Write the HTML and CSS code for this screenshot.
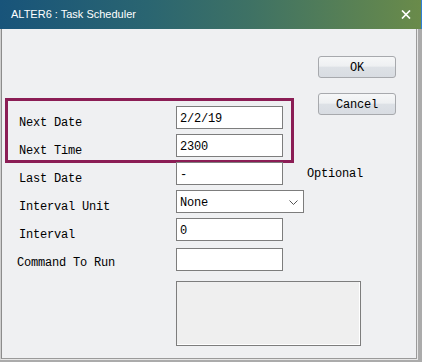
FILE: index.html
```html
<!DOCTYPE html>
<html>
<head>
<meta charset="utf-8">
<title>ALTER6 : Task Scheduler</title>
<link rel="stylesheet" href="styles.css">
</head>
<body>
<div class="window">
  <div class="titlebar">
    <span class="title">ALTER6 : Task Scheduler</span>
    <svg class="close" width="10" height="9" viewBox="0 0 10 9"><path d="M1 0.5 L9 8.5 M9 0.5 L1 8.5" stroke="#fff" stroke-width="1.7" fill="none"/></svg>
  </div>
  <div class="frame">
    <div class="edge">
      <div class="client">
        <div class="form">
          <div class="group">
            <div class="row"><label class="lbl">Next Date</label><input class="field" value="2/2/19"></div>
            <div class="row"><label class="lbl">Next Time</label><input class="field" value="2300"></div>
          </div>
          <div class="row"><label class="lbl">Last Date</label><input class="field" value="-"><span class="note">Optional</span></div>
          <div class="row"><label class="lbl">Interval Unit</label>
            <div class="select"><span>None</span><svg class="chev" width="9" height="5" viewBox="0 0 9 5"><path d="M0.5 0.5 L4.5 4.5 L8.5 0.5" stroke="#555" stroke-width="1" fill="none"/></svg></div>
          </div>
          <div class="row"><label class="lbl">Interval</label><input class="field" value="0"></div>
          <div class="row cmd"><label class="lbl">Command To Run</label><input class="field" value=""></div>
          <div class="row area-row"><span class="lbl"></span><textarea class="area"></textarea></div>
        </div>
        <div class="buttons">
          <button class="btn">OK</button>
          <button class="btn">Cancel</button>
        </div>
      </div>
    </div>
  </div>
</div>
</body>
</html>
```
FILE: styles.css
```css
html, body {
  margin: 0;
  padding: 0;
  background: #eff0f2;
}
.window {
  width: 422px;
  height: 362px;
  display: flex;
  flex-direction: column;
  overflow: hidden;
}
.titlebar {
  box-sizing: border-box;
  height: 29px;
  flex: none;
  display: flex;
  align-items: center;
  justify-content: space-between;
  padding: 0 10px 0 11px;
  background: linear-gradient(90deg, #18547a 0%, #2a6571 35%, #3f7264 60%, #6a8b4a 100%);
  border-right: 1px solid #2f7fd6;
}
.title {
  font-family: "Liberation Sans", Arial, sans-serif;
  font-size: 11px;
  color: #fff;
  line-height: 29px;
}
.close {
  display: block;
  margin-top: 0px;
}
.frame {
  flex: 1;
  background: #ababab;
  padding: 0 4px 2px 0;
  display: flex;
}
.edge {
  flex: 1;
  display: flex;
  border-left: 1px solid #cfcfcf;
  border-right: 1px solid #e6e6e6;
  border-bottom: 1px solid #e6e6e6;
}
.client {
  flex: 1;
  display: flex;
  align-items: flex-start;
  background: #eff0f2;
  border-left: 1px solid #8c8c8c;
  border-right: 1px solid #9a9a9a;
  border-bottom: 1px solid #9a9a9a;
  padding-left: 6px;
}
.form {
  width: 283px;
  flex: none;
  margin-top: 72px;
  display: flex;
  flex-direction: column;
  gap: 5px;
}
.group {
  outline: 3px solid #8b1d55;
  padding: 5px 0 3px;
  display: flex;
  flex-direction: column;
  gap: 5px;
  margin-bottom: -3px;
}
.row {
  display: flex;
  align-items: flex-start;
  height: 23px;
}
.lbl, .field, .note, .select, .btn {
  font-family: "Liberation Mono", "Courier New", monospace;
  font-size: 12px;
  letter-spacing: -0.2px;
  color: #000;
}
.lbl {
  width: 168px;
  flex: none;
  box-sizing: border-box;
  padding-left: 11px;
  padding-top: 10px;
  line-height: 14px;
  white-space: nowrap;
}
.cmd {
  margin-top: 2px;
}
.cmd .lbl {
  padding-left: 9px;
  padding-top: 8px;
}
.field {
  box-sizing: border-box;
  width: 107px;
  height: 23px;
  margin: 0;
  border: 1px solid #7d7d7d;
  background: #fff;
  padding: 2px 2px 0 3px;
  outline: none;
  flex: none;
}
.note {
  margin-left: 24px;
  padding-top: 5px;
  line-height: 14px;
  white-space: nowrap;
}
.select {
  box-sizing: border-box;
  width: 128px;
  height: 23px;
  flex: none;
  border: 1px solid #7d7d7d;
  background: #fff;
  display: flex;
  align-items: center;
  justify-content: space-between;
  padding: 2px 5px 0 3px;
  line-height: 14px;
}
.chev {
  display: block;
  margin-top: -1px;
}
.area-row {
  height: 65px;
  margin-top: 5px;
}
.area-row .lbl {
  padding: 0;
}
.area {
  box-sizing: border-box;
  width: 185px;
  height: 65px;
  margin: 0;
  flex: none;
  resize: none;
  border: 1px solid #7d7d7d;
  background: #efefef;
  box-shadow: inset -1px -1px 0 #ffffff;
  outline: none;
}
.buttons {
  margin-left: 27px;
  margin-top: 27px;
  display: flex;
  flex-direction: column;
  gap: 15px;
}
.btn {
  box-sizing: border-box;
  width: 78px;
  height: 22px;
  margin: 0;
  padding: 1px 0 0;
  border: 1px solid #a7a9ad;
  border-radius: 3px;
  background: linear-gradient(#f6f7f8 0%, #eef0f2 45%, #dde1e6 52%, #d8dce2 100%);
  line-height: 14px;
  text-align: center;
}
```
